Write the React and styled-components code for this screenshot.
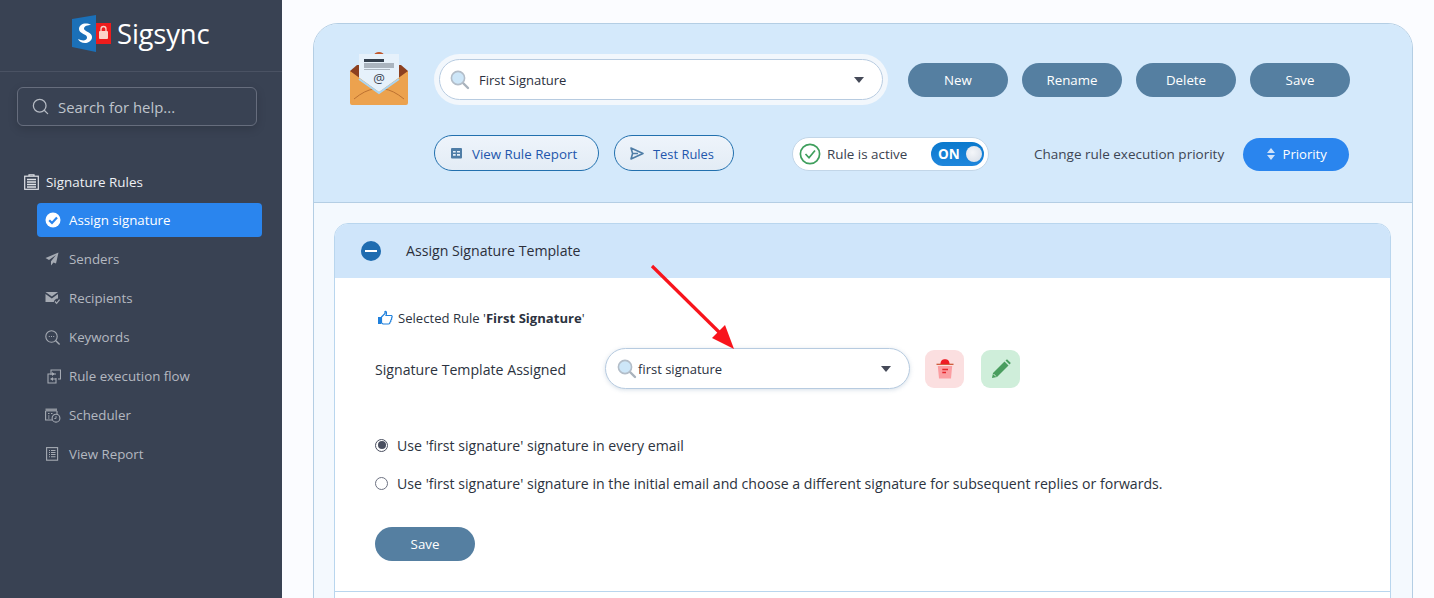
import React from "react";
import styled, { createGlobalStyle } from "styled-components";
import { Search } from "lucide-react";

const FONT = `"Open Sans", "Noto Sans", "Liberation Sans", sans-serif`;

const GlobalStyle = createGlobalStyle`
  html, body { margin: 0; padding: 0; height: 100%; overflow: hidden; }
  body { font-family: ${FONT}; font-size: 13.5px; color: #2c3340; background: #fbfcff; }
  * { box-sizing: border-box; }
`;

const Page = styled.div`
  display: flex;
  width: 1434px;
  height: 598px;
  overflow: hidden;
`;

/* sidebar */
const Sidebar = styled.aside`
  width: 282px;
  flex: none;
  background: #394253;
  color: #fff;
`;
const LogoBar = styled.div`
  height: 72px;
  border-bottom: 1px solid #4a5263;
  display: flex;
  padding: 15px 0 0 72px;
  gap: 6px;
`;
const LogoText = styled.div`
  font-size: 27.5px;
  line-height: 38px;
  color: #fff;
  letter-spacing: -0.2px;
`;
const SearchBox = styled.div`
  margin: 15px 25px 0 17px;
  height: 39px;
  border: 1px solid #666d7d;
  border-radius: 6px;
  box-shadow: 0 3px 10px rgba(0, 0, 0, 0.15);
  display: flex;
  align-items: center;
  padding-left: 13px;
  gap: 8px;
  color: #bfc4cc;
  font-size: 14.9px;
`;
const NavHead = styled.div`
  margin: 46px 0 0 24px;
  height: 20px;
  display: flex;
  align-items: center;
  gap: 7px;
  font-size: 13.4px;
  color: #eef0f4;
`;
const NavList = styled.nav`
  margin: 11px 20px 0 37px;
  display: flex;
  flex-direction: column;
  gap: 5px;
`;
const NavItem = styled.div`
  height: 34px;
  border-radius: 4px;
  display: flex;
  align-items: center;
  padding-left: 8px;
  gap: 8px;
  font-size: 13.3px;
  color: ${(p) => (p.$active ? "#fff" : "#b4b8c0")};
  background: ${(p) => (p.$active ? "#2a85ee" : "transparent")};
  svg { flex: none; }
`;

/* main */
const Main = styled.main`
  flex: 1;
  padding: 23px 21px 0 31px;
`;
const Panel = styled.section`
  width: 1100px;
  height: 620px;
  border: 1px solid #b4cee4;
  border-radius: 25px 25px 0 0;
  background: #f4f9fe;
  overflow: hidden;
`;
const Head = styled.header`
  height: 179px;
  background: #d4e9fb;
  border-bottom: 1px solid #b4cee4;
  padding: 28px 0 0 36px;
`;
const HeadRow = styled.div`
  display: flex;
  align-items: center;
`;
const HeadRowTwo = styled(HeadRow)`
  margin: 29px 0 0 84px;
`;
const ComboOuter = styled.div`
  margin-left: 24px;
  width: 454px;
  height: 51px;
  padding: 5px;
  border-radius: 26px;
  background: #f2f7fc;
`;
const Combo = styled.div`
  height: ${(p) => p.$h || "100%"};
  width: ${(p) => p.$w || "100%"};
  border: 1px solid #b7cbe0;
  border-radius: 21px;
  background: #fff;
  display: flex;
  align-items: center;
  padding: ${(p) => p.$pad || "1px 18px 0 10px"};
  gap: ${(p) => p.$gap || "9px"};
  color: #2a3040;
  font-size: 13px;
  box-shadow: ${(p) => (p.$shadow ? "0 1px 4px rgba(120, 150, 180, 0.3)" : "none")};
`;
const ComboText = styled.span`
  flex: 1;
`;
const Caret = styled.span`
  width: 0;
  height: 0;
  border-left: 5.5px solid transparent;
  border-right: 5.5px solid transparent;
  border-top: 6px solid #454a58;
`;
const Actions = styled.div`
  display: flex;
  gap: 14px;
  margin: 1px 0 0 20px;
`;
const SteelButton = styled.button`
  width: 100px;
  height: 34px;
  border: 0;
  border-radius: 17px;
  background: #557fa1;
  color: #fff;
  font-family: ${FONT};
  font-size: 13.3px;
  padding: 0;
`;
const OutlineButton = styled.button`
  width: ${(p) => p.$w};
  height: 36px;
  margin-right: ${(p) => p.$mr || "0"};
  border: 1px solid #2270ae;
  border-radius: 18px;
  background: linear-gradient(#eef4fb, #e3ecf5);
  color: #2256ac;
  font-family: ${FONT};
  font-size: ${(p) => p.$fs || "13.3px"};
  display: flex;
  align-items: center;
  padding: 1px 0 0 15px;
  gap: 9px;
`;
const ActivePill = styled.div`
  margin: 2px 0 0 58px;
  width: 197px;
  height: 34px;
  border: 1px solid #c2d6e8;
  border-radius: 17px;
  background: #fff;
  display: flex;
  align-items: center;
  padding: 0 4px 0 6px;
  gap: 6px;
  font-size: 13.4px;
  color: #3a4250;
`;
const ToggleTrack = styled.div`
  margin-left: auto;
  width: 53px;
  height: 24px;
  border-radius: 12px;
  background: linear-gradient(#0a79cd, #1f86dc);
  color: #fff;
  font-weight: 700;
  font-size: 13.5px;
  display: flex;
  align-items: center;
  justify-content: space-between;
  padding: 0 2px 0 7px;
`;
const ToggleKnob = styled.span`
  width: 16px;
  height: 16px;
  border-radius: 50%;
  background: radial-gradient(circle at 40% 40%, #f4f6f9, #d5dce6);
`;
const PriorityLabel = styled.span`
  margin: 2px 0 0 45px;
  font-size: 13.5px;
  color: #3d4553;
`;
const PriorityButton = styled.button`
  margin: 2px 0 0 19px;
  width: 106px;
  height: 33px;
  border: 0;
  border-radius: 17px;
  background: #2a85ee;
  color: #fff;
  font-family: ${FONT};
  font-size: 13.1px;
  display: flex;
  align-items: center;
  justify-content: center;
  gap: 7px;
  padding: 0;
`;

/* accordion */
const Card = styled.div`
  margin: 20px 21px 0 20px;
  border: 1px solid #b9d6ee;
  border-radius: 14px 14px 0 0;
  background: #fff;
  height: 400px;
  overflow: hidden;
`;
const CardHead = styled.div`
  height: 54px;
  background: #cfe5fa;
  display: flex;
  align-items: center;
  padding: 0 0 1px 26px;
  gap: 25px;
  font-size: 14.15px;
  color: #2c2f3a;
`;
const MinusBadge = styled.span`
  width: 20px;
  height: 20px;
  border-radius: 50%;
  background: #1f6cb0;
  display: flex;
  align-items: center;
  justify-content: center;
  &::before {
    content: "";
    width: 12px;
    height: 2px;
    background: #fff;
  }
`;
const CardBody = styled.div`
  padding: 30px 0 0 40px;
  border-bottom: 1px solid #b9d6ee;
  height: 314px;
`;
const Selected = styled.div`
  display: flex;
  align-items: center;
  gap: 5px;
  height: 20px;
  margin-left: 2px;
  font-size: 13.1px;
  color: #2c3340;
  b { font-weight: 700; }
`;
const TemplateRow = styled.div`
  display: flex;
  align-items: center;
  margin-top: 20px;
  font-size: 14.15px;
  color: #2c3340;
`;
const TemplateLabel = styled.span`
  width: 230px;
  padding-top: 1px;
`;
const SquareButton = styled.div`
  width: 39px;
  height: 38px;
  border-radius: 9px;
  margin-left: ${(p) => p.$ml};
  background: ${(p) => p.$bg};
  display: flex;
  align-items: center;
  justify-content: center;
`;
const Options = styled.div`
  margin-top: 46px;
  display: flex;
  flex-direction: column;
  gap: 18px;
`;
const Option = styled.label`
  display: flex;
  align-items: center;
  gap: 9px;
  height: 20px;
  font-size: 14.13px;
  color: #2c3340;
`;
const Radio = styled.span`
  width: 13px;
  height: 13px;
  border-radius: 50%;
  border: 1px solid ${(p) => (p.$on ? "#4a4f60" : "#6d7282")};
  background: #fff;
  display: flex;
  align-items: center;
  justify-content: center;
  &::before {
    content: "";
    width: 8px;
    height: 8px;
    border-radius: 50%;
    background: ${(p) => (p.$on ? "#4a4f60" : "transparent")};
  }
`;
const BodySave = styled(SteelButton)`
  display: block;
  margin-top: 34px;
`;
const Arrow = styled.svg`
  position: absolute;
  left: 645px;
  top: 260px;
  pointer-events: none;
`;

const LogoMark = () => (
  <svg width="39" height="37" viewBox="0 0 39 37">
    <path d="M0 4 L24 0 V37 L0 32 Z" fill="#1b70b8" />
    <path d="M19 10 C14 7 7 9 7 14 C7 19 16 19 15 23 C14.5 26 10 26 6 24 C8 29 18 30 20 23 C21 17 12 17 12 13.5 C12 11 16 10 19 10 Z" fill="#fff" />
    <rect x="24" y="8" width="15" height="21" fill="#ee1c1c" />
    <rect x="27" y="16" width="9" height="8" rx="1" fill="#fbd4c8" />
    <path d="M29 16 V14 a2.5 2.5 0 0 1 5 0 V16" fill="none" stroke="#fbd4c8" strokeWidth="1.3" />
  </svg>
);

const MailArt = () => (
  <svg width="60" height="54" viewBox="1 0 60 54">
    <path d="M25 3 a5 3 0 0 1 10 0 Z" fill="#c0582c" />
    <path d="M1 19 L8 13 H52 L59 19 V30 H1 Z" fill="#8c4020" />
    <rect x="10" y="2" width="40" height="38" fill="#e6f1fb" />
    <rect x="15" y="7" width="20" height="3" fill="#34404e" />
    <rect x="15" y="11" width="30" height="5" fill="#aab4bf" />
    <rect x="15" y="17" width="26" height="1" fill="#aab4bf" />
    <text x="30" y="31" fontFamily="Open Sans, sans-serif" fontSize="13" textAnchor="middle" fill="#3a4250">@</text>
    <path d="M1 19 L30 40 L59 19 V51 a2 2 0 0 1 -2 2 H3 a2 2 0 0 1 -2 -2 Z" fill="#eca24e" />
    <path d="M5 47 Q16 38 25 37 M55 47 Q44 38 35 37" fill="none" stroke="#b0642a" strokeWidth="0.8" />
    <path d="M10 27 L30 41 L50 27" fill="none" stroke="#a9d5f3" strokeWidth="2" />
  </svg>
);

const Lens = () => (
  <svg width="20" height="20" viewBox="0 0 20 20">
    <path d="M12.5 12.5 L18 18" stroke="#a9b2bc" strokeWidth="2.4" strokeLinecap="round" />
    <circle cx="8" cy="8" r="6.6" fill="#cde6f8" stroke="#b3bdc8" strokeWidth="1.6" />
  </svg>
);

const CheckBadge = () => (
  <svg width="16" height="16" viewBox="0 0 16 16">
    <circle cx="8" cy="8" r="7.5" fill="#fff" />
    <path d="M4.2 8.2 L7 11 L12 5.6" fill="none" stroke="#2a85ee" strokeWidth="2.2" />
  </svg>
);

const ClipboardIcon = () => (
  <svg width="15" height="16" viewBox="0 0 15 16">
    <path d="M5 2 V0.8 H10 V2" fill="none" stroke="#dfe2e7" strokeWidth="1.2" />
    <rect x="0.7" y="2.2" width="13.6" height="13.1" fill="none" stroke="#dfe2e7" strokeWidth="1.2" />
    <path d="M3 5.5 H12 M3 8 H12 M3 10.5 H12 M3 13 H12" stroke="#dfe2e7" strokeWidth="1.4" />
  </svg>
);

const PlaneIcon = () => (
  <svg width="16" height="14" viewBox="0 0 16 14">
    <path d="M13.5 0.5 L0.5 6 L4 8 L11 3 L6 9.2 V13.5 L8.5 10.5 L11 11.5 Z" fill="#a5aab3" />
  </svg>
);

const RecipientsIcon = () => (
  <svg width="16" height="14" viewBox="0 0 16 14">
    <path d="M0.5 1 H13 L6.8 5.6 Z" fill="#a5aab3" />
    <path d="M0.5 3 L6.8 7.6 L13 3 V7.4 C10.5 7.6 9 9 8.8 11 H0.5 Z" fill="#a5aab3" />
    <path d="M10 10.5 L11.6 12.3 L14.6 8.6" fill="none" stroke="#a5aab3" strokeWidth="1.2" />
  </svg>
);

const KeywordsIcon = () => (
  <svg width="16" height="15" viewBox="0 0 16 15">
    <circle cx="6.5" cy="6.5" r="5.7" fill="none" stroke="#a5aab3" strokeWidth="1.1" />
    <path d="M10.8 10.8 L14.6 14.4" stroke="#a5aab3" strokeWidth="1.4" />
    <path d="M3.8 6.5 H4.8 M6 6.5 H7 M8.2 6.5 H9.2" stroke="#a5aab3" strokeWidth="1.1" />
  </svg>
);

const FlowIcon = () => (
  <svg width="16" height="15" viewBox="0 0 16 15">
    <path d="M5 4 V1 H14.5 V10 H12" fill="none" stroke="#a5aab3" strokeWidth="1.1" transform="translate(1 0)" />
    <path d="M11 5 H3 V14 H11 V9" fill="none" stroke="#a5aab3" strokeWidth="1.1" />
    <path d="M7 3 L9.5 5 L7 7 Z M8 8 L5.5 10 L8 12 Z" fill="#a5aab3" />
    <path d="M5 5 H9 M5.5 10 H11" stroke="#a5aab3" strokeWidth="1.1" />
  </svg>
);

const SchedulerIcon = () => (
  <svg width="16" height="15" viewBox="0 0 16 15">
    <rect x="0.5" y="0.5" width="11.5" height="3" fill="#8e939d" />
    <path d="M0.6 3 V12 H7" fill="none" stroke="#a5aab3" strokeWidth="1.1" />
    <path d="M12 3 V6" stroke="#a5aab3" strokeWidth="1.1" />
    <path d="M3 5.5 H4.5 M6 5.5 H7.5 M3 8 H4.5 M3 10 H4.5" stroke="#a5aab3" strokeWidth="1.1" />
    <circle cx="11" cy="10.2" r="3.9" fill="none" stroke="#a5aab3" strokeWidth="1.1" />
    <path d="M11 8 V10.5 H9.3" fill="none" stroke="#a5aab3" strokeWidth="0.9" />
  </svg>
);

const ReportIcon = () => (
  <svg width="16" height="14" viewBox="0 0 16 14">
    <rect x="1.6" y="0.6" width="11" height="12.6" fill="none" stroke="#a5aab3" strokeWidth="1.1" />
    <path d="M4 3.5 H5 M6 3.5 H10.5 M4 5.5 H5 M6 5.5 H10.5 M4 7.5 H5 M6 7.5 H10.5 M4 9.8 H5 M6 9.8 H10.5" stroke="#a5aab3" strokeWidth="1.1" />
  </svg>
);

const TableIcon = () => (
  <svg width="13" height="13" viewBox="0 0 13 13">
    <rect x="1" y="1" width="11" height="10.5" rx="1" fill="#4f7da6" />
    <path d="M3 4 H5.7 V5.6 H3 Z M7 4 H10 V5.6 H7 Z M3 7 H5.7 V8.8 H3 Z M7 7 H10 V8.8 H7 Z" fill="#e8f0f8" />
  </svg>
);

const OutlinePlane = () => (
  <svg width="14" height="13" viewBox="0 0 14 13">
    <path d="M1 1 L13 6.5 L1 12 L2.6 6.5 Z M2.6 6.5 H8" fill="none" stroke="#4f7da6" strokeWidth="1.6" strokeLinejoin="round" />
  </svg>
);

const ThumbIcon = () => (
  <svg width="16" height="16" viewBox="0 0 16 16">
    <path d="M1 7 H4 V14 H1 Z" fill="#1f80dc" />
    <path d="M4.5 7 L8 3.5 V1.5 C9.5 1.2 10 3 9 5.5 H14.5 C15.5 6 15.2 7.5 14.5 8 C15 9 14.5 10 13.8 10.2 C14 11 13.6 12 13 12.2 C13 13.4 12.4 14 11.5 14 H6 L4.5 13 Z" fill="#fff" stroke="#1f80dc" strokeWidth="1.2" />
  </svg>
);

const TrashIcon = () => (
  <svg width="22" height="22" viewBox="0 0 22 22">
    <path d="M2.5 6.3 H19.5" stroke="#c9502c" strokeWidth="1.2" />
    <path d="M6.5 6 C6.5 2.5 8.5 1.2 11 1.2 C13.5 1.2 15.5 2.5 15.5 6 Z" fill="#ee1c25" />
    <path d="M3.8 8 H18.2 L17 20.5 H5 Z" fill="#fb9ea2" />
    <path d="M8.3 11.5 H14 M8.3 14.5 H12" stroke="#e5262c" strokeWidth="1.6" />
  </svg>
);

const PencilIcon = () => (
  <svg width="22" height="22" viewBox="0 0 22 22">
    <path d="M3 15 L14.5 3.5 L18.5 7.5 L7 19 L2 20 Z" fill="#4a9d5f" />
    <path d="M15.5 2.5 L17 1.2 L20.8 5 L19.5 6.5 Z" fill="#4a9d5f" />
    <path d="M3.5 16 L6 18.5" stroke="#d5f1dc" strokeWidth="1" />
  </svg>
);

const RuleCheck = () => (
  <svg width="22" height="22" viewBox="0 0 22 22">
    <circle cx="11" cy="11" r="9.6" fill="none" stroke="#3f9f5d" strokeWidth="1.7" />
    <path d="M6.5 11 L10 14.8 L16 7.5" fill="none" stroke="#3f9f5d" strokeWidth="1.7" />
  </svg>
);

const SortIcon = () => (
  <svg width="10" height="14" viewBox="0 0 10 14">
    <path d="M5 1 L9 6 H1 Z M5 13 L1 8 H9 Z" fill="#cfe2fa" />
  </svg>
);

const navItems = [
  ["Senders", <PlaneIcon key="a" />],
  ["Recipients", <RecipientsIcon key="b" />],
  ["Keywords", <KeywordsIcon key="c" />],
  ["Rule execution flow", <FlowIcon key="d" />],
  ["Scheduler", <SchedulerIcon key="e" />],
  ["View Report", <ReportIcon key="f" />],
];

const App = () => (
  <>
    <GlobalStyle />
    <Page>
      <Sidebar>
        <LogoBar>
          <LogoMark />
          <LogoText>Sigsync</LogoText>
        </LogoBar>
        <SearchBox>
          <Search size={19} color="#b5bac3" strokeWidth={1.6} />
          Search for help...
        </SearchBox>
        <NavHead>
          <ClipboardIcon />
          Signature Rules
        </NavHead>
        <NavList>
          <NavItem $active>
            <CheckBadge />
            Assign signature
          </NavItem>
          {navItems.map(([label, icon]) => (
            <NavItem key={label}>
              {icon}
              {label}
            </NavItem>
          ))}
        </NavList>
      </Sidebar>

      <Main>
        <Panel>
          <Head>
            <HeadRow>
              <MailArt />
              <ComboOuter>
                <Combo>
                  <Lens />
                  <ComboText>First Signature</ComboText>
                  <Caret />
                </Combo>
              </ComboOuter>
              <Actions>
                <SteelButton>New</SteelButton>
                <SteelButton>Rename</SteelButton>
                <SteelButton>Delete</SteelButton>
                <SteelButton>Save</SteelButton>
              </Actions>
            </HeadRow>
            <HeadRowTwo>
              <OutlineButton $w="165px" $mr="15px">
                <TableIcon />
                View Rule Report
              </OutlineButton>
              <OutlineButton $w="120px" $fs="12.9px">
                <OutlinePlane />
                Test Rules
              </OutlineButton>
              <ActivePill>
                <RuleCheck />
                Rule is active
                <ToggleTrack>
                  ON
                  <ToggleKnob />
                </ToggleTrack>
              </ActivePill>
              <PriorityLabel>Change rule execution priority</PriorityLabel>
              <PriorityButton>
                <SortIcon />
                Priority
              </PriorityButton>
            </HeadRowTwo>
          </Head>
          <Card>
            <CardHead>
              <MinusBadge />
              Assign Signature Template
            </CardHead>
            <CardBody>
              <Selected>
                <ThumbIcon />
                <span>
                  Selected Rule '<b>First Signature</b>'
                </span>
              </Selected>
              <TemplateRow>
                <TemplateLabel>Signature Template Assigned</TemplateLabel>
                <Combo $w="305px" $h="41px" $pad="0 18px 0 11px" $gap="1px" $shadow>
                  <Lens />
                  <ComboText>first signature</ComboText>
                  <Caret />
                </Combo>
                <SquareButton $ml="15px" $bg="#fbdfe0">
                  <TrashIcon />
                </SquareButton>
                <SquareButton $ml="17px" $bg="#cfeeda">
                  <PencilIcon />
                </SquareButton>
              </TemplateRow>
              <Options>
                <Option>
                  <Radio $on />
                  Use 'first signature' signature in every email
                </Option>
                <Option>
                  <Radio />
                  Use 'first signature' signature in the initial email and choose a different signature for subsequent replies or forwards.
                </Option>
              </Options>
              <BodySave>Save</BodySave>
            </CardBody>
          </Card>
        </Panel>
      </Main>
    </Page>
    <Arrow width="100" height="100" viewBox="0 0 100 100">
      <path d="M7 6 L76 74" stroke="#f8141c" strokeWidth="3.2" />
      <path d="M89 89 L67 78 L80 65 Z" fill="#f8141c" />
    </Arrow>
  </>
);

export default App;
